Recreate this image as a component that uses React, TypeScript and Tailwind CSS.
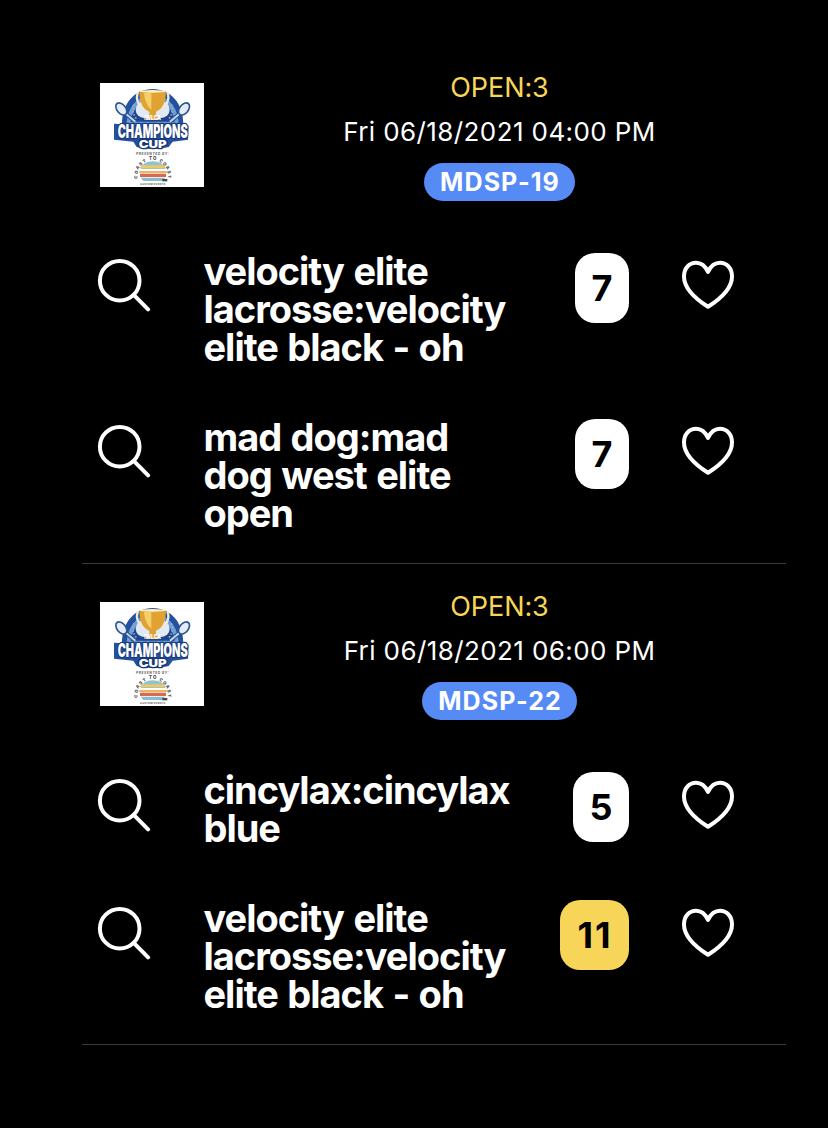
type Team = { name: string[]; seats: number; tone: "white" | "yellow"; badge: string };
type Game = { time: string; code: string; iconShift: string; teams: Team[] };

const games: Game[] = [
  {
    time: "Fri 06/18/2021 04:00 PM",
    code: "MDSP-19",
    iconShift: "pt-0",
    teams: [
      { name: ["velocity elite", "lacrosse:velocity", "elite black - oh"], seats: 7, tone: "white", badge: "w-[54px]" },
      { name: ["mad dog:mad", "dog west elite", "open"], seats: 7, tone: "white", badge: "w-[54px]" },
    ],
  },
  {
    time: "Fri 06/18/2021 06:00 PM",
    code: "MDSP-22",
    iconShift: "pt-px",
    teams: [
      { name: ["cincylax:cincylax", "blue"], seats: 5, tone: "white", badge: "w-[56px]" },
      { name: ["velocity elite", "lacrosse:velocity", "elite black - oh"], seats: 11, tone: "yellow", badge: "w-[69px] tracking-[2px] pl-[1px]" },
    ],
  },
];

function EventLogo() {
  return (
    <svg className="h-[104px] w-[104px] shrink-0 bg-white" viewBox="0 0 312 312" fontFamily="Inter, sans-serif">
      <path d="M66 124C66 60 105 18 158 18s92 42 92 106l16 4-2 42-46 6-12 16c-26 8-70 8-96 0l-10-16-58-6V122Z" fill="#2450a0" />
      <path d="M80 120c4-50 34-84 78-84s74 34 78 84Z" fill="#6c9fd8" />
      <path d="M92 116c6-40 28-66 66-66s60 26 66 66Z" fill="#1d468f" />
      <circle cx="132" cy="80" r="25" fill="#dfeaf5" />
      <circle cx="184" cy="80" r="25" fill="#dfeaf5" />
      <path d="M102 64c-6 16-2 34 10 46M214 64c6 16 2 34-10 46" fill="none" stroke="#a3a9bb" strokeWidth="5" strokeDasharray="5 5" />
      <path d="M114 28c-8 20 0 42 24 50M202 28c8 20 0 42-24 50" fill="none" stroke="#eeeadc" strokeWidth="7" />
      <path d="M118 24h80c0 34-10 54-30 62v16h10v9h-40v-9h10V86c-20-8-30-28-30-62Z" fill="#dfa233" />
      <path d="M132 30h22v50c-14-12-20-28-22-50Z" fill="#f5cf68" />
      <ellipse cx="158" cy="25" rx="40" ry="4" fill="#fff0bd" />
      <path d="m72 88 34 28M244 88l-34 28" stroke="#2b4f8f" strokeWidth="12" />
      <path d="m72 88 34 28M244 88l-34 28" stroke="#c3d6ec" strokeWidth="6" />
      <g fill="#e4edf7" stroke="#2d5490" strokeWidth="5">
        <ellipse cx="64" cy="78" rx="13" ry="21" transform="rotate(-38 64 78)" />
        <ellipse cx="252" cy="78" rx="13" ry="21" transform="rotate(38 252 78)" />
      </g>
      <text x="158" y="111" textAnchor="middle" fontSize="20" fontWeight="900" fill="#fff" textLength="50" lengthAdjust="spacingAndGlyphs">IWLCA</text>
      <g fill="#fff" stroke="#183876" strokeWidth="8" strokeLinejoin="round" paintOrder="stroke" fontWeight="900" textAnchor="middle">
        <text x="158" y="164" fontSize="56" textLength="210" lengthAdjust="spacingAndGlyphs">CHAMPIONS</text>
        <text x="158" y="194" fontSize="32" textLength="84" lengthAdjust="spacingAndGlyphs">CUP</text>
      </g>
      <text x="157" y="217" textAnchor="middle" fontSize="10" fontWeight="700" fontStyle="italic" fill="#666" textLength="98">PRESENTED BY:</text>
      <path d="M122 261c2-16 16-26 36-26s36 10 40 26Z" fill="#8fc4cf" />
      <path d="M124 247h70v9h-74Z" fill="#efc768" />
      <path d="M120 258h78v6h-78Z" fill="#fff" />
      <path d="M118 264h84v6h-84Z" fill="#f0b45d" />
      <path d="M120 272h78v10h-78Z" fill="#d96a50" />
      <path d="M122 284h74l-8 10h-58Z" fill="#86bed0" />
      <g fill="#454545" fontSize="13" fontWeight="800" textAnchor="middle">
        <text transform="translate(112 283) rotate(-85)">C</text>
        <text transform="translate(113 269) rotate(-72)">O</text>
        <text transform="translate(117 256) rotate(-58)">A</text>
        <text transform="translate(125 246) rotate(-45)">S</text>
        <text transform="translate(135 238) rotate(-30)">T</text>
        <text x="158" y="232">T O</text>
        <text transform="translate(181 238) rotate(30)">C</text>
        <text transform="translate(191 246) rotate(45)">O</text>
        <text transform="translate(199 256) rotate(58)">A</text>
        <text transform="translate(203 269) rotate(72)">S</text>
        <text transform="translate(204 282) rotate(85)">T</text>
      </g>
      <text x="158" y="306" textAnchor="middle" fontSize="8" fontWeight="700" fill="#666" textLength="76">CUSTOM EVENTS</text>
      <path d="M187 288h15v7h-15Z" fill="#494949" />
    </svg>
  );
}

function SearchIcon() {
  return (
    <svg className="h-[56px] w-[56px]" viewBox="0 0 56 56" fill="none" stroke="white" strokeWidth="4" strokeLinecap="round">
      <circle cx="23.7" cy="24.7" r="19.8" />
      <path d="m38.2 39.4 13.9 13.9" />
    </svg>
  );
}

function HeartIcon() {
  return (
    <svg className="h-[52px] w-[56px]" viewBox="0 0 56 52" fill="none" stroke="white" strokeWidth="4" strokeLinejoin="round">
      <path d="M28 47.8C15 39.5 4 29.5 4 17.5 4 9.5 9 3.8 16 3.8 21.5 3.8 25.5 7.5 28 13 30.5 7.5 34.5 3.8 40 3.8 47 3.8 52 9.5 52 17.5 52 29.5 41 39.5 28 47.8Z" />
    </svg>
  );
}

function TeamRow({ team, iconShift }: { team: Team; iconShift: string }) {
  return (
    <div className="flex items-start">
      <button aria-label="Search" className={`mt-1 ml-[14px] w-[107px] shrink-0 ${iconShift}`}>
        <SearchIcon />
      </button>
      <div className="w-[327px] pl-[0.5px] text-[38px] leading-[38px] font-bold tracking-[-1.02px] [word-spacing:1.5px] whitespace-nowrap text-white">
        {team.name.map((line) => (
          <div key={line}>{line}</div>
        ))}
      </div>
      <div className="mt-px flex w-[99px] shrink-0 justify-end">
        <div
          className={`flex h-[70px] items-center justify-center rounded-[20px] text-[36px] font-bold text-black ${team.badge} ${team.tone === "yellow" ? "bg-[#f7d558]" : "bg-white"}`}
        >
          {team.seats}
        </div>
      </div>
      <button aria-label="Favorite" className={`mt-[7px] ml-[51px] ${iconShift}`}>
        <HeartIcon />
      </button>
    </div>
  );
}

function GameCard({ game }: { game: Game }) {
  return (
    <section className="border-b border-[#3a3a3a] pb-[31px]">
      <header className="flex h-[170px] items-start pl-[18px]">
        <EventLogo />
        <div className="-mt-[13px] ml-[10px] flex w-[571px] flex-col items-center">
          <div className="text-[27px] leading-9 tracking-[-0.1px] text-[#f7d558]">OPEN:3</div>
          <div className="mt-2 text-[26px] leading-9 tracking-[0.4px] whitespace-nowrap text-white">{game.time}</div>
          <div className="mt-[13px] flex h-[38px] items-center rounded-full bg-[#568bf6] pt-px pr-[15.5px] pl-[16.5px] text-[25px] font-bold tracking-[1.1px] text-white">
            {game.code}
          </div>
        </div>
      </header>
      <div className="-mt-px flex flex-col gap-[52px]">
        {game.teams.map((team) => (
          <TeamRow key={team.name[0]} team={team} iconShift={game.iconShift} />
        ))}
      </div>
    </section>
  );
}

export default function App() {
  return (
    <main className="h-[1128px] w-[828px] bg-black pt-[83px] pr-[42px] pl-[82px] font-[Inter,sans-serif]">
      <div className="flex flex-col gap-[38px]">
        {games.map((game) => (
          <GameCard key={game.code} game={game} />
        ))}
      </div>
    </main>
  );
}
